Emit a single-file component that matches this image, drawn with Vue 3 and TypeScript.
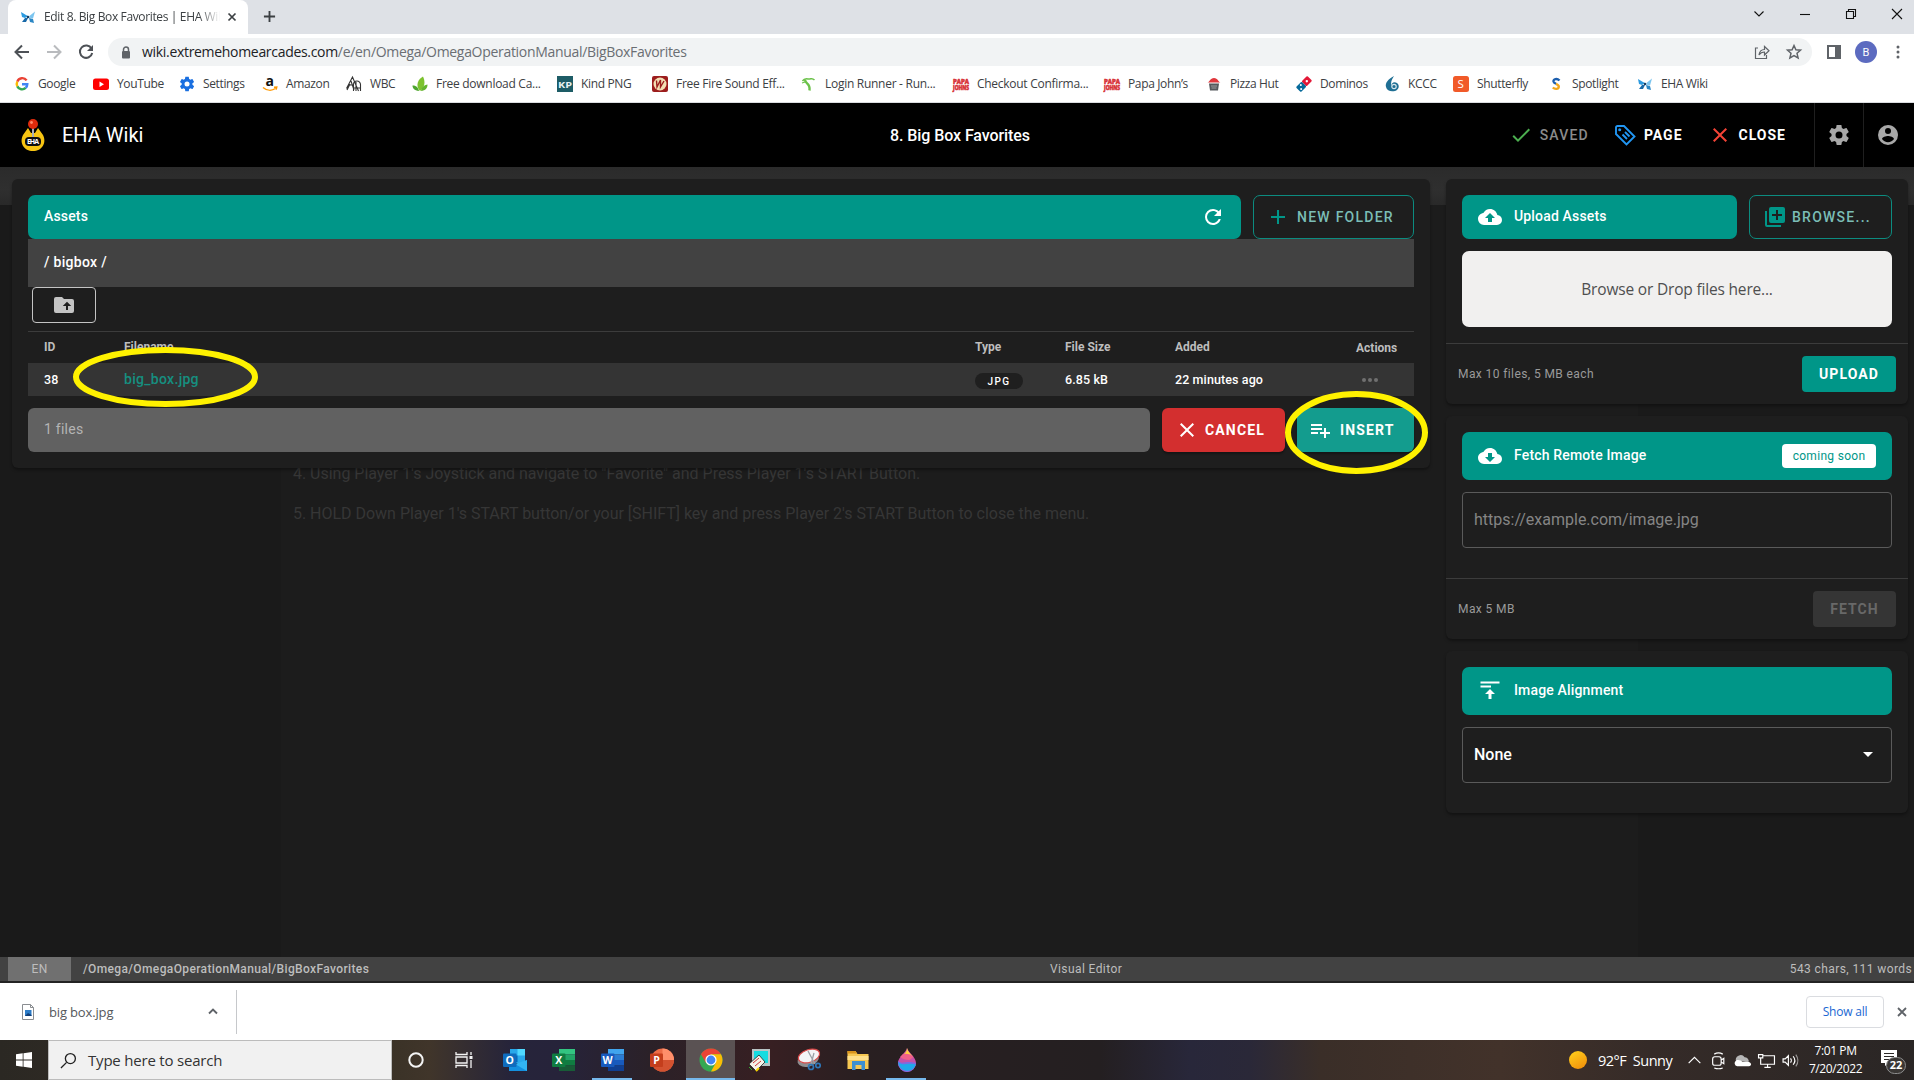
<script setup lang="ts">
interface Bookmark {
  label: string
  icon: string
  width: number
}

const bookmarks: Bookmark[] = [
  { label: 'Google', icon: 'google', width: 79 },
  { label: 'YouTube', icon: 'youtube', width: 86 },
  { label: 'Settings', icon: 'settings', width: 83 },
  { label: 'Amazon', icon: 'amazon', width: 84 },
  { label: 'WBC', icon: 'wbc', width: 66 },
  { label: 'Free download Ca...', icon: 'leaf', width: 145 },
  { label: 'Kind PNG', icon: 'kp', width: 95 },
  { label: 'Free Fire Sound Eff...', icon: 'fire', width: 149 },
  { label: 'Login Runner - Run...', icon: 'runner', width: 152 },
  { label: 'Checkout Confirma...', icon: 'papa', width: 151 },
  { label: 'Papa John’s', icon: 'papa', width: 102 },
  { label: 'Pizza Hut', icon: 'hut', width: 90 },
  { label: 'Dominos', icon: 'dominos', width: 88 },
  { label: 'KCCC', icon: 'kccc', width: 69 },
  { label: 'Shutterfly', icon: 'shutterfly', width: 95 },
  { label: 'Spotlight', icon: 'spotlight', width: 89 },
  { label: 'EHA Wiki', icon: 'eha', width: 80 },
]

const mdi = {
  check: 'M21,7L9,19L3.5,13.5L4.91,12.09L9,16.17L19.59,5.59L21,7Z',
  close: 'M19,6.41L17.59,5L12,10.59L6.41,5L5,6.41L10.59,12L5,17.59L6.41,19L12,13.41L17.59,19L19,17.59L13.41,12L19,6.41Z',
  plus: 'M19,13H13V19H11V13H5V11H11V5H13V11H19V13Z',
  refresh: 'M17.65,6.35C16.2,4.9 14.21,4 12,4A8,8 0 0,0 4,12A8,8 0 0,0 12,20C15.73,20 18.84,17.45 19.73,14H17.65C16.83,16.33 14.61,18 12,18A6,6 0 0,1 6,12A6,6 0 0,1 12,6C13.66,6 15.14,6.69 16.22,7.78L13,11H20V4L17.65,6.35Z',
  folderUp: 'M20,6A2,2 0 0,1 22,8V18A2,2 0 0,1 20,20H4A2,2 0 0,1 2,18V6A2,2 0 0,1 4,4H10L12,6H20M10.75,13H14V17H16V13H19.25L15,8.75',
  playlistPlus: 'M3,16H10V14H3M18,14V10H16V14H12V16H16V20H18V16H22V14M14,6H3V8H14M14,10H3V12H14V10Z',
  cloudUp: 'M14,13V17H10V13H7L12,8L17,13M19.35,10.03C18.67,6.59 15.64,4 12,4C9.11,4 6.6,5.64 5.35,8.03C2.34,8.36 0,10.9 0,14A6,6 0 0,0 6,20H19A5,5 0 0,0 24,15C24,12.36 21.95,10.22 19.35,10.03Z',
  cloudDown: 'M17,13L12,18L7,13H10V9H14V13M19.35,10.03C18.67,6.59 15.64,4 12,4C9.11,4 6.6,5.64 5.35,8.03C2.34,8.36 0,10.9 0,14A6,6 0 0,0 6,20H19A5,5 0 0,0 24,15C24,12.36 21.95,10.22 19.35,10.03Z',
  plusBoxes: 'M19,11H15V15H13V11H9V9H13V5H15V9H19M20,2H8A2,2 0 0,0 6,4V16A2,2 0 0,0 8,18H20A2,2 0 0,0 22,16V4A2,2 0 0,0 20,2M4,6H2V20A2,2 0 0,0 4,22H18V20H4V6Z',
  alignTop: 'M2.5,2.5H21.5V4.5H2.5ZM2.5,6.5H13V8.5H2.5ZM12,10L17,15H13.5V20H10.5V15H7Z',
  cog: 'M12,15.5A3.5,3.5 0 0,1 8.5,12A3.5,3.5 0 0,1 12,8.5A3.5,3.5 0 0,1 15.5,12A3.5,3.5 0 0,1 12,15.5M19.43,12.97C19.47,12.65 19.5,12.33 19.5,12C19.5,11.67 19.47,11.34 19.43,11L21.54,9.37C21.73,9.22 21.78,8.95 21.66,8.73L19.66,5.27C19.54,5.05 19.27,4.96 19.05,5.05L16.56,6.05C16.04,5.66 15.5,5.32 14.87,5.07L14.5,2.42C14.46,2.18 14.25,2 14,2H10C9.75,2 9.54,2.18 9.5,2.42L9.13,5.07C8.5,5.32 7.96,5.66 7.44,6.05L4.95,5.05C4.73,4.96 4.46,5.05 4.34,5.27L2.34,8.73C2.21,8.95 2.27,9.22 2.46,9.37L4.57,11C4.53,11.34 4.5,11.67 4.5,12C4.5,12.33 4.53,12.65 4.57,12.97L2.46,14.63C2.27,14.78 2.21,15.05 2.34,15.27L4.34,18.73C4.46,18.95 4.73,19.03 4.95,18.95L7.44,17.94C7.96,18.34 8.5,18.68 9.13,18.93L9.5,21.58C9.54,21.82 9.75,22 10,22H14C14.25,22 14.46,21.82 14.5,21.58L14.87,18.93C15.5,18.67 16.04,18.34 16.56,17.94L19.05,18.95C19.27,19.03 19.54,18.95 19.66,18.73L21.66,15.27C21.78,15.05 21.73,14.78 21.54,14.63L19.43,12.97Z',
  account: 'M12,19.2C9.5,19.2 7.29,17.92 6,16C6.03,14 10,12.9 12,12.9C14,12.9 17.97,14 18,16C16.71,17.92 14.5,19.2 12,19.2M12,5A3,3 0 0,1 15,8A3,3 0 0,1 12,11A3,3 0 0,1 9,8A3,3 0 0,1 12,5M12,2A10,10 0 0,0 2,12A10,10 0 0,0 12,22A10,10 0 0,0 22,12C22,6.47 17.5,2 12,2Z',
  menuDown: 'M7,10L12,15L17,10H7Z',
}

const apps = ['outlook', 'excel', 'word', 'powerpoint', 'chrome', 'viewer', 'snip', 'explorer', 'paint']
const openApps = ['word', 'chrome', 'paint']
const office: Record<string, { letter: string; top: string; mid: string; low: string; tile: string }> = {
  excel: { letter: 'X', top: '#33c481', mid: '#21a366', low: '#185c37', tile: '#107c41' },
  word: { letter: 'W', top: '#41a5ee', mid: '#2b7cd3', low: '#103f91', tile: '#185abd' },
}
</script>

<template>
  <div class="screen">
    <header class="tabstrip">
      <div class="tab">
        <svg class="i16 fav" viewBox="0 0 16 16">
          <path d="M1 3l5 3 2 1-3 2-3-1z" fill="#2d9be0" /><path d="M15 2.500l-5 4-1 2 4 1z" fill="#7cc5ef" />
          <path d="M2 13l3-4 3 0-2 4z" fill="#1768a8" /><path d="M14 14l-1-4-4-1 1 4z" fill="#2a86c4" />
          <circle cx="8" cy="8" r="1.300" fill="#1b3d60" />
        </svg>
        <span class="tab-title">Edit 8. Big Box Favorites | EHA Wiki</span>
        <svg class="tab-x" viewBox="0 0 10 10"><path d="M1.500 1.500l7 7m0-7l-7 7" stroke="#3c4043" stroke-width="1.700" /></svg>
      </div>
      <svg class="newtab" viewBox="0 0 14 14"><path d="M7 1v12M1 7h12" stroke="#3c4043" stroke-width="2" /></svg>
      <div class="win">
        <svg viewBox="0 0 12 12"><path d="M1.500 3.500l4.500 4.500 4.500-4.500" /></svg>
        <svg viewBox="0 0 12 12"><path d="M1 6.500h10" /></svg>
        <svg viewBox="0 0 12 12"><path d="M1.500 3.500h7v7h-7zM3.500 3.500v-2h7v7h-2" /></svg>
        <svg viewBox="0 0 12 12"><path d="M1 1l10 10M11 1L1 11" /></svg>
      </div>
    </header>

    <div class="toolbar">
      <svg class="nav" viewBox="0 0 16 16"><path d="M15 8H2M8 1.500L1.500 8 8 14.500" stroke="#4d5156" /></svg>
      <svg class="nav" viewBox="0 0 16 16"><path d="M1 8h13M8 1.500L14.500 8 8 14.500" stroke="#b9bbbe" /></svg>
      <svg class="nav" viewBox="0 0 16 16"><path d="M13.500 4.500A6.200 6.200 0 1 0 14.200 9" stroke="#4d5156" /><path d="M15 1v6H9z" fill="#4d5156" stroke="none" /></svg>
      <div class="omnibox">
        <svg class="lock" viewBox="0 0 10 13"><path d="M2.500 5V3.500a2.500 2.500 0 0 1 5 0V5" fill="none" stroke="#5f6368" stroke-width="1.500" /><rect x="1" y="5" width="8" height="7.500" rx="1" fill="#5f6368" /></svg>
        <span class="url">wiki.extremehomearcades.com<i>/e/en/Omega/OmegaOperationManual/BigBoxFavorites</i></span>
        <svg class="obi share" viewBox="0 0 16 16"><path d="M4 4H1.500v10.500h11V11M5 11c.5-4 2.500-5.500 5.500-5.500V2.500l4.500 4.300-4.500 4.200V8C8 8 6.300 9 5 11z" /></svg>
        <svg class="obi" viewBox="0 0 16 16"><path d="M8 1.500l1.900 4.300 4.600.4-3.500 3.100 1.100 4.600L8 11.500l-4.100 2.400L5 9.300 1.500 6.200l4.600-.4z" stroke-width="1.500" /></svg>
      </div>
      <svg class="panel" viewBox="0 0 14 14"><rect x="1" y="1" width="12" height="12" fill="none" stroke="#5f6368" stroke-width="2" /><path d="M8 1h5v12H8z" fill="#5f6368" /></svg>
      <span class="avatar">B</span>
      <svg class="dots" viewBox="0 0 4 14"><circle cx="2" cy="2" r="1.500" /><circle cx="2" cy="7" r="1.500" /><circle cx="2" cy="12" r="1.500" /></svg>
    </div>

    <nav class="bookmarks">
      <a v-for="b in bookmarks" :key="b.label" :class="{ long: b.label.endsWith('...') }" :style="{ width: b.width + 'px' }">
        <svg class="i16" viewBox="0 0 16 16">
          <template v-if="b.icon === 'google'">
            <g fill="none" stroke-width="2.400"><path d="M12.600 4.400A5.300 5.300 0 0 0 3.300 5.600" stroke="#ea4335" /><path d="M3.300 5.600a5.300 5.300 0 0 0 0 4.800" stroke="#fbbc05" /><path d="M3.300 10.400a5.300 5.300 0 0 0 8.400 1.500" stroke="#34a853" /><path d="M11.700 11.900A5.300 5.300 0 0 0 13.300 8.200H8" stroke="#4285f4" /></g>
          </template>
          <template v-else-if="b.icon === 'youtube'"><rect y="2.500" width="16" height="11.500" rx="2.500" fill="#f00" /><path d="M6.500 5.500v5.500l4.500-2.700z" fill="#fff" /></template>
          <template v-else-if="b.icon === 'settings'"><g transform="translate(-.6 -.6) scale(.72)"><path :d="mdi.cog" fill="#1a6fe0" /></g></template>
          <template v-else-if="b.icon === 'amazon'"><text x="3.500" y="10" font-size="14" font-weight="bold" fill="#111">a</text><path d="M1 11.500c4 3.500 9 3.300 12.500 1M12 11.300l2.800-.3-.6 2.700" fill="none" stroke="#f90" stroke-width="1.400" /></template>
          <template v-else-if="b.icon === 'wbc'"><g fill="none" stroke="#333" stroke-width="1.100"><path d="M.5 12.500L6.500 1l6 14M3 9h4.500M1 14l3-6M7.500 15V8.500a3.500 3.500 0 0 1 7 0V15M5 5l3 9M10 6v9M7 12h7" /></g></template>
          <template v-else-if="b.icon === 'leaf'"><path d="M8 15C3 10 6 3 11 .5 13.500 6 13 11 8 15z" fill="#7cc22e" /><path d="M7 15C2 14.500.500 12 .5 9.500 4 9.500 6 11 7 15z" fill="#4da52f" /><path d="M9 15c1-5 4-6 6.500-6.500 0 3.500-2 6-6.500 6.500z" fill="#63b32e" /></template>
          <template v-else-if="b.icon === 'kp'"><rect width="16" height="16" fill="#1d5c66" /><text x="1" y="11.500" font-size="9.500" font-weight="bold" fill="#e8f2f2" textLength="14" lengthAdjust="spacingAndGlyphs">KP</text></template>
          <template v-else-if="b.icon === 'fire'"><rect width="16" height="16" rx="2" fill="#9c1d1d" /><circle cx="8" cy="8" r="6.500" fill="#f3dfb4" /><path d="M4.500 4.500L5 11l3.500-7v7L12 5" fill="none" stroke="#9c1d1d" stroke-width="1.400" /></template>
          <template v-else-if="b.icon === 'runner'"><g fill="none" stroke="#6cc24a"><path d="M1.500 5C4 1 7 3.500 9 3s2.500-1 4.500 1" stroke-width="1.500" /><path d="M4 3.500c0 5 5.500 3 4.500 11" stroke-width="2.400" /><path d="M1 7l3-1" stroke-width="1.200" /></g></template>
          <template v-else-if="b.icon === 'papa'"><text x="0" y="8" font-size="7" font-weight="bold" fill="#d8353a" stroke="#d8353a" stroke-width=".7" textLength="16" lengthAdjust="spacingAndGlyphs">PAPA</text><text x="0" y="13.800" font-size="6.500" font-weight="bold" fill="#d8353a" stroke="#d8353a" stroke-width=".7" textLength="16" lengthAdjust="spacingAndGlyphs">JOHNS</text></template>
          <template v-else-if="b.icon === 'hut'"><path d="M1.500 6.500C4 6 4 2 8 2s4 4 6.500 4.500z" fill="#e0373c" /><path d="M3 7.500h10l-1 7H4z" fill="#55585c" /><path d="M5 10h6M5.500 12h5" stroke="#bbb" stroke-width=".7" /></template>
          <template v-else-if="b.icon === 'dominos'"><g transform="rotate(45 8 8)"><rect x="4.500" y="0" width="7" height="8" rx="1" fill="#e31837" /><rect x="4.500" y="8" width="7" height="8" rx="1" fill="#066a9b" /><g fill="#fff"><circle cx="8" cy="4" r="1.200" /><circle cx="6.500" cy="11" r="1" /><circle cx="9.500" cy="13.500" r="1" /></g></g></template>
          <template v-else-if="b.icon === 'kccc'"><path d="M10 0C4 3 1 7 2 11s5 5 9 4 5-6 2-8-6 0-5 3C6 7 8 3 10 0z" fill="#1f6f94" /><circle cx="10" cy="10.500" r="2.200" fill="none" stroke="#d7e6ec" stroke-width="1.200" /></template>
          <template v-else-if="b.icon === 'shutterfly'"><rect width="16" height="16" rx="2.500" fill="#f15a29" /><text x="4.500" y="12" font-size="11.500" fill="#fff">S</text></template>
          <template v-else-if="b.icon === 'spotlight'"><path d="M11.500 4.500C9 2 5 3 5.500 5.500c.3 1.300 1.500 1.800 2.600 2.300" fill="none" stroke="#1d5fae" stroke-width="2.400" /><path d="M8 7.800c1.600.7 3 1.400 2.800 3-.3 2.500-4 2.700-6 .7" fill="none" stroke="#f2a81d" stroke-width="2.400" /></template>
          <template v-else><path d="M1 3l5 3 2 1-3 2-3-1z" fill="#2d9be0" /><path d="M15 2.500l-5 4-1 2 4 1z" fill="#7cc5ef" /><path d="M2 13l3-4h3l-2 4z" fill="#1768a8" /><path d="M14 14l-1-4-4-1 1 4z" fill="#2a86c4" /><circle cx="8" cy="8" r="1.300" fill="#1b3d60" /></template>
        </svg>
        <span>{{ b.label }}</span>
      </a>
    </nav>

    <div class="appbar">
      <div class="brand">
        <svg class="logo" viewBox="0 0 26 34">
          <path d="M3 17l5-7 3 5h4l3-5 5 7c4 8-1 16-10 16S-1 25 3 17z" fill="#f7c412" />
          <path d="M13 10v9" stroke="#a9adb3" stroke-width="2" /><circle cx="13" cy="6" r="5" fill="#e02b0c" /><circle cx="11.500" cy="4.500" r="1.400" fill="#ff8a6a" />
          <rect x="5" y="19" width="16" height="9" rx="4" fill="#0d0d10" /><text x="7" y="26.200" font-size="7" font-weight="bold" fill="#fff" textLength="12">EHA</text>
        </svg>
        <span>EHA Wiki</span>
      </div>
      <div class="page-title">8. Big Box Favorites</div>
      <div class="actions">
        <span class="act saved"><svg class="i24" viewBox="0 0 24 24"><path :d="mdi.check" fill="#4caf50" /></svg>SAVED</span>
        <span class="act page"><svg class="i24" viewBox="0 0 24 24"><g fill="none" stroke="#2196f3" stroke-width="1.900"><path d="M3 4.500V11l10.500 10.500 8-8L11 3H4.500A1.500 1.500 0 0 0 3 4.500z" /><path d="M9.500 11.500l4.500 4.500M12 9l4.500 4.500" /></g><circle cx="6.700" cy="6.700" r="1.500" fill="#2196f3" /></svg>PAGE</span>
        <span class="act shut"><svg class="i24" viewBox="0 0 24 24"><path :d="mdi.close" fill="#f44336" /></svg>CLOSE</span>
        <span class="sq"><svg class="i24" viewBox="0 0 24 24"><path :d="mdi.cog" fill="#a8a8a8" /></svg></span>
        <span class="sq"><svg class="i24" viewBox="0 0 24 24"><path :d="mdi.account" fill="#a8a8a8" /></svg></span>
      </div>
    </div>

    <main class="editor">
      <div class="editor-tools"></div>
      <div class="paper">
        <p>4. Using Player 1's Joystick and navigate to "Favorite" and Press Player 1's START Button.</p>
        <p>5. HOLD Down Player 1's START button/or your [SHIFT] key and press Player 2's START Button to close the menu.</p>
      </div>

      <div class="modal">
        <section class="card assets">
          <div class="row">
            <div class="bar teal"><span>Assets</span><svg class="i24 end" viewBox="0 0 24 24"><path :d="mdi.refresh" fill="#fff" /></svg></div>
            <button class="outline newf"><svg class="i24" viewBox="0 0 24 24"><path :d="mdi.plus" fill="#009688" /></svg>NEW FOLDER</button>
          </div>
          <div class="crumb">/ bigbox /</div>
          <button class="up"><svg class="i24" viewBox="0 0 24 24"><path :d="mdi.folderUp" fill="#c4c4c4" /></svg></button>
          <div class="tr th"><span>ID</span><span>Filename</span><span>Type</span><span>File Size</span><span>Added</span><span class="ac">Actions</span></div>
          <div class="tr td"><span>38</span><span class="fn">big_box.jpg</span><span><b class="chip">JPG</b></span><span>6.85 kB</span><span>22 minutes ago</span><span class="ell"><i></i><i></i><i></i></span></div>
          <div class="row foot">
            <div class="count">1 files</div>
            <button class="cancel"><svg class="i24" viewBox="0 0 24 24"><path :d="mdi.close" fill="#fff" /></svg>CANCEL</button>
            <button class="insert"><svg class="i24" viewBox="0 0 24 24"><path :d="mdi.playlistPlus" fill="#fff" /></svg>INSERT</button>
          </div>
        </section>

        <aside>
          <section class="card c1">
            <div class="row">
              <div class="bar teal"><svg class="i24" viewBox="0 0 24 24"><path :d="mdi.cloudUp" fill="#fff" /></svg><span>Upload Assets</span></div>
              <button class="outline browse"><svg class="i24" viewBox="0 0 24 24"><path :d="mdi.plusBoxes" fill="#009688" /></svg>BROWSE...</button>
            </div>
            <div class="drop">Browse or Drop files here...</div>
            <div class="cardfoot"><span>Max 10 files, 5 MB each</span><button class="upload">UPLOAD</button></div>
          </section>
          <section class="card c2">
            <div class="bar tall teal"><svg class="i24" viewBox="0 0 24 24"><path :d="mdi.cloudDown" fill="#fff" /></svg><span>Fetch Remote Image</span><div class="soon">coming soon</div></div>
            <div class="field ph">https://example.com/image.jpg</div>
            <div class="cardfoot"><span>Max 5 MB</span><button class="fetch">FETCH</button></div>
          </section>
          <section class="card c3">
            <div class="bar tall teal"><svg class="i24" viewBox="0 0 24 24"><path :d="mdi.alignTop" fill="#fff" /></svg><span>Image Alignment</span></div>
            <div class="field">None<svg class="i24 end" viewBox="0 0 24 24"><path :d="mdi.menuDown" fill="#fff" /></svg></div>
          </section>
        </aside>
      </div>
    </main>

    <div class="status">
      <span class="en">EN</span>
      <span class="path">/Omega/OmegaOperationManual/BigBoxFavorites</span>
      <span class="mode">Visual Editor</span>
      <span class="chars">543 chars, 111 words</span>
    </div>

    <div class="downloads">
      <div class="dl">
        <svg class="file" viewBox="0 0 12 16"><path d="M.5.5h8l3 3v12H.5zM8.500.5v3h3" fill="#fff" stroke="#8a8d91" /><rect x="3" y="6" width="6.500" height="6" fill="#2d7cc7" /><path d="M3 12l3-3 3.500 2v1z" fill="#123f78" /></svg>
        <span>big box.jpg</span>
        <svg class="chev" viewBox="0 0 10 7"><path d="M1 5.500l4-4 4 4" fill="none" stroke="#5f6368" stroke-width="1.900" /></svg>
      </div>
      <button class="showall">Show all</button>
      <svg class="dlx" viewBox="0 0 10 10"><path d="M1 1l8 8m0-8L1 9" stroke="#5f6368" stroke-width="1.800" /></svg>
    </div>

    <footer class="taskbar">
      <div class="start"><svg viewBox="0 0 16 16"><path d="M0 2.200L6.700 1.300V7.600H0zM7.500 1.200L16 0v7.600H7.500zM0 8.400h6.700v6.300L0 13.800zM7.500 8.400H16V16l-8.500-1.200z" fill="#fff" /></svg></div>
      <div class="search"><svg viewBox="0 0 18 18"><circle cx="11" cy="7" r="5.300" /><path d="M7 11l-6 6" /></svg>Type here to search</div>
      <span class="tb cortana"><svg viewBox="0 0 24 24"><circle cx="12" cy="12" r="6.700" fill="none" stroke="#f4f4f4" stroke-width="2" /></svg></span>
      <span class="tb tv"><svg viewBox="0 0 24 24"><g fill="none" stroke="#f4f4f4" stroke-width="1.300"><path d="M4 4v2.500h11V4M4 20v-2.500h11V20M4 9h11v6H4zM19 4v3M19 12v8" /></g><rect x="17.500" y="8" width="3" height="3" fill="#f4f4f4" /></svg></span>
      <span v-for="a in apps" :key="a" class="tb" :class="{ open: openApps.includes(a), active: a === 'chrome' }">
        <svg viewBox="0 0 24 24">
          <template v-if="office[a]">
            <path d="M7 1h16v5.500H7z" :fill="office[a].top" /><path d="M7 6.500h16V12H7z" :fill="office[a].mid" /><path d="M7 12h16v5.500H7z" :fill="office[a].tile" /><path d="M7 17.500h16V23H7z" :fill="office[a].low" />
            <rect x="0" y="5.500" width="13.500" height="13.500" rx="1" :fill="office[a].tile" /><text x="6.700" y="16" text-anchor="middle" font-size="10.500" font-weight="bold" fill="#fff">{{ office[a].letter }}</text>
          </template>
          <template v-else-if="a === 'outlook'">
            <path d="M7 1h15v14H7z" fill="#28a8ea" /><path d="M14.500 1H22v6.500h-7.500z" fill="#50d9ff" /><path d="M7 7.500h7.500V14H7z" fill="#0364b8" /><path d="M6 12l9 5 9-5v11H6z" fill="#1490df" /><path d="M24 12v11L12 16z" fill="#32b4f2" />
            <rect y="5.500" width="13.500" height="13.500" rx="1" fill="#0f6cbd" /><text x="6.700" y="16" text-anchor="middle" font-size="10.500" font-weight="bold" fill="#fff">O</text>
          </template>
          <template v-else-if="a === 'powerpoint'">
            <circle cx="12.500" cy="12" r="11.500" fill="#ed6c47" /><path d="M12.500.5A11.500 11.500 0 0 1 24 12H12.500z" fill="#ff8f6b" /><path d="M1 12h23a11.500 11.500 0 0 1-23 0z" fill="#d35230" />
            <rect y="5.500" width="13" height="13.500" rx="1" fill="#c43e1c" /><text x="6.500" y="16" text-anchor="middle" font-size="10.500" font-weight="bold" fill="#fff">P</text>
          </template>
          <template v-else-if="a === 'chrome'">
            <circle cx="12" cy="12" r="11.500" fill="#34a853" /><path d="M2 6.300A11.500 11.500 0 0 1 22 6.300H12L7 15z" fill="#ea4335" /><path d="M22 6.300A11.500 11.500 0 0 1 12 23.500L17 14.500 12 6.300z" fill="#fbbc05" />
            <circle cx="12" cy="12" r="5.600" fill="#fff" /><circle cx="12" cy="12" r="4.400" fill="#4285f4" />
          </template>
          <template v-else-if="a === 'viewer'">
            <rect x="4" y="1" width="18" height="17" fill="#b8c4c4" /><rect x="6" y="3" width="14" height="12" fill="#14dce0" /><path d="M1 16L11 7l6 7-9 9z" fill="#f5f2e8" stroke="#222" stroke-width=".8" /><path d="M5 15l6-5M7 18l6-5" stroke="#c33" /><path d="M8 23l3-3" stroke="#f6d400" stroke-width="2" /><path d="M1 19l3 3" stroke="#3a3" />
          </template>
          <template v-else-if="a === 'snip'">
            <ellipse cx="11" cy="11.500" rx="11" ry="7" transform="rotate(-18 11 11)" fill="#8d8d90" /><ellipse cx="12" cy="8" rx="11" ry="6.300" transform="rotate(-18 12 8)" fill="#f4f4f6" stroke="#d94b4b" stroke-width="1.200" />
            <path d="M11 3l7 13M17 5l-3 11" stroke="#9aa0a6" stroke-width="1.300" /><g fill="none" stroke="#2e77b8" stroke-width="1.700"><circle cx="14" cy="19" r="2.500" /><circle cx="21" cy="17.500" r="2.200" /></g>
          </template>
          <template v-else-if="a === 'explorer'">
            <path d="M1.500 3h8l2 3h11v15h-21z" fill="#f6c752" /><path d="M1.500 3h8l1.500 2.500h-9.500z" fill="#d9941b" /><path d="M1.500 8h21v4h-21z" fill="#ffe08a" /><path d="M6 22v-9h13v9h-3.500v-5h-6v5z" fill="#3d8fd1" />
          </template>
          <template v-else>
            <path d="M12 0c1 4 9 9 9 15a9 9 0 0 1-18 0C3 9 11 5 12 0z" fill="#c651a8" /><path d="M12 0c1 4 3.500 6 5.500 8L9 6c2-2 3-3 3-6z" fill="#ffd23e" /><path d="M8 6c4-1 8 0 10.500 3l-4 3c-4 0-7-1-9.500-3z" fill="#f0608a" /><path d="M3.200 13c4 4 8-1 17.800 2a9 9 0 0 1-18 0z" fill="#7c6be0" /><path d="M3.200 14c5 5 9 0 17.600 2.500A9 9 0 0 1 3.200 14z" fill="#1fa9ea" />
          </template>
        </svg>
      </span>
      <div class="tray">
        <span class="sun"></span>
        <span class="weather">92°F&nbsp; Sunny</span>
        <svg class="tri caret" viewBox="0 0 16 16"><path d="M2.500 10.500L8 5l5.500 5.500" /></svg>
        <svg class="tri" viewBox="0 0 16 16"><rect x="2.500" y="4.500" width="8" height="8" rx="2" /><path d="M10.500 7.500l2.500-1.500v5l-2.500-1.500M4 2c2.500-1.500 5.500-1.500 8 0M4 15c2.500 1 5.500 1 8 0" /></svg>
        <svg class="tri" viewBox="0 0 16 16"><path d="M2 9a4.500 4.500 0 0 1 8-4 4 4 0 0 1 4 4z" fill="#b6b6b6" stroke="none" /><path d="M3 13.500a3 3 0 0 1-1-5.500c2-1 5 0 6 1.500 2-1 7-1 8 1.500a2 2 0 0 1-2 2.500z" fill="#fff" stroke="none" /></svg>
        <svg class="tri" viewBox="0 0 16 16"><path d="M4 3.500h11.500v8H3M9 11.500V14M6 14.500h6M.5 2.500h4v3h-4zM2.500 5.500V12" /></svg>
        <svg class="tri" viewBox="0 0 16 16"><path d="M1 6.500h2l3-3v9l-3-3H1zM8 6c1 1 1 3 0 4M10.500 4c2 2.500 2 5.500 0 8" /><path d="M13 2.500c2.500 3.500 2.500 7.500 0 11" opacity=".5" /></svg>
        <div class="clock"><span>7:01 PM</span><span>7/20/2022</span></div>
        <div class="notes"><svg viewBox="0 0 16 16"><path d="M0 0h16v13H8l-4 3v-3H0z" fill="#fff" /><path d="M3 3.500h10M3 6.500h10M3 9.500h6" stroke="#2d2a28" stroke-width="1.200" /></svg><b>22</b></div>
      </div>
    </footer>

    <svg class="marks" viewBox="0 0 1914 1080">
      <ellipse cx="165.500" cy="377" rx="89.500" ry="27" />
      <ellipse cx="1356.500" cy="432.500" rx="68.500" ry="38.500" />
    </svg>
  </div>
</template>

<style>
body { margin: 0; background: #1c1c1c; overflow: hidden; }
</style>

<style scoped>
* { box-sizing: border-box; }
.screen { position: relative; width: 1914px; height: 1080px; display: flex; flex-direction: column; overflow: hidden; font-family: Roboto, sans-serif; background: #1b1b1b; }
svg { display: block; flex: none; overflow: visible; }
svg text { font-family: "Open Sans", sans-serif; letter-spacing: 0; }
button { margin: 0; padding: 0; border: 0; background: none; font: inherit; display: flex; align-items: center; flex: none; white-space: nowrap; }
.i16 { width: 16px; height: 16px; }
.i24 { width: 24px; height: 24px; }
.end { margin-left: auto; }

.tabstrip { flex: none; height: 34px; background: #dee1e6; display: flex; align-items: flex-start; padding-left: 8px; }
.tab { width: 240px; height: 34px; background: #fff; border-radius: 8px 8px 0 0; display: flex; align-items: center; padding-left: 12px; }
.tab-title { width: 176px; margin-left: 8px; padding-bottom: 1px; font: 12px "Open Sans", sans-serif; letter-spacing: -0.36px; color: #3c4043; white-space: nowrap; overflow: hidden; mask-image: linear-gradient(90deg, #000 88%, transparent); }
.tab-x { width: 10px; height: 10px; margin-left: 7px; }
.newtab { width: 13px; height: 13px; margin: 10px 0 0 15px; }
.win { margin-left: auto; display: flex; gap: 34px; padding: 8px 11px 0 0; }
.win svg { width: 12px; height: 12px; fill: none; stroke: #111; stroke-width: 1.1; }

.toolbar { flex: none; height: 36px; background: #fff; display: flex; align-items: center; padding-left: 14px; }
.nav { width: 16px; height: 16px; margin-right: 16px; fill: none; stroke-width: 2; }
.omnibox { width: 1704px; height: 28px; margin-left: -2px; border-radius: 14px; background: #f1f3f4; display: flex; align-items: center; padding-left: 13px; }
.lock { width: 10px; height: 13px; }
.url { margin-left: 11px; padding-bottom: 1px; flex: 1; font: 14px "Open Sans", sans-serif; letter-spacing: -0.31px; color: #202124; }
.url i { font-style: normal; color: #6a6e73; }
.obi { width: 16px; height: 16px; margin-right: 10px; fill: none; stroke: #5f6368; stroke-width: 1.2; }
.share { margin-right: 16px; }
.panel { width: 14px; height: 14px; margin-left: 15px; }
.avatar { width: 22px; height: 22px; margin-left: 14px; border-radius: 50%; background: #5c6bc0; color: #fff; font-size: 11px; display: flex; align-items: center; justify-content: center; }
.dots { width: 4px; height: 14px; margin-left: 19px; fill: #5f6368; }

.bookmarks { flex: none; height: 33px; background: #fff; border-bottom: 1px solid #dadce0; display: flex; align-items: flex-start; padding: 6px 0 0 14px; }
.bookmarks a { flex: none; display: flex; align-items: center; gap: 8px; font: 12px/16px "Open Sans", sans-serif; letter-spacing: -0.36px; color: #3c4043; white-space: nowrap; }
.bookmarks .long { letter-spacing: -0.28px; }

.appbar { flex: none; height: 64px; background: #000; color: #fff; display: flex; align-items: center; }
.brand { flex: 1; display: flex; align-items: center; padding-left: 20px; font-size: 20px; }
.logo { width: 26px; height: 34px; margin-right: 16px; }
.page-title { font-size: 16px; font-weight: 500; letter-spacing: -0.08px; }
.actions { flex: none; width: 884px; display: flex; justify-content: flex-end; align-items: center; height: 64px; padding-right: 2px; }
.act { display: flex; align-items: center; gap: 7px; font-size: 14px; font-weight: 500; letter-spacing: 1.2px; }
.saved { color: #8b8b8b; margin-right: 24px; }
.page { margin-right: 25px; }
.shut { margin-right: 28px; }
.page, .shut { font-weight: 700; letter-spacing: 1px; }
.sq { width: 49px; height: 64px; border-left: 1px solid #1f1f1f; display: flex; align-items: center; justify-content: center; }

.editor { flex: none; height: 790px; position: relative; background: #1a1a1a; display: flex; flex-direction: column; }
.editor-tools { flex: none; height: 38px; background: linear-gradient(#2b2b2b, #2f2f2f 60%, #292929); }
.paper { flex: 1; width: 1357px; margin-left: 281px; background: #1c1c1c; padding: 257px 12px 0; font-size: 16px; line-height: 24px; letter-spacing: -0.02px; color: #363636; }
.paper p { margin: 0 0 16px; white-space: nowrap; }
.modal { position: absolute; inset: 0; display: flex; align-items: flex-start; gap: 16px; padding: 12px 6px 0 12px; }
aside { width: 462px; display: flex; flex-direction: column; gap: 12px; }
.card { background: #1e1e1e; border-radius: 6px; box-shadow: 0 2px 3px rgba(0, 0, 0, .35); padding: 16px; }
.assets { width: 1418px; height: 289px; }
.row { display: flex; gap: 12px; }
.bar { flex: 1; height: 44px; border-radius: 7px; display: flex; align-items: center; padding: 0 16px; color: #fff; font-size: 14px; font-weight: 500; letter-spacing: 0.16px; }
.bar > span { padding-bottom: 2px; }
.teal { background: #009688; }
.tall { height: 48px; flex: none; }
aside .bar .i24:first-child { margin-right: 12px; }
.outline { height: 44px; border: 1px solid #0c8c80; border-radius: 7px; color: #7bbdb6; font-size: 14px; font-weight: 500; letter-spacing: 1.25px; }
.newf { width: 161px; padding-left: 12px; gap: 7px; }
.browse { width: 143px; padding-left: 13px; gap: 5px; }
.crumb { height: 48px; background: #424242; color: #fff; padding-left: 16px; font-size: 14px; font-weight: 500; letter-spacing: 0.3px; line-height: 46px; }
.up { width: 64px; height: 36px; margin: 0 0 8px 4px; border: 1px solid #c4c4c4; border-radius: 4px; justify-content: center; }
.tr { display: grid; grid-template-columns: 80px 851px 90px 110px 180px 1fr; padding-left: 16px; align-items: center; }
.th { height: 32px; padding-bottom: 2px; border-top: 1px solid #3c3c3c; color: #bdbdbd; font-size: 12px; font-weight: 700; }
.ac { padding: 2px 0 0 1px; }
.td { height: 33px; background: #343434; color: #fff; font-size: 12.5px; font-weight: 500; letter-spacing: 0.1px; }
.fn { color: #168f80; font-size: 14px; letter-spacing: 0.3px; padding-bottom: 2px; }
.chip { display: flex; align-items: center; justify-content: center; width: 48px; height: 16px; margin-top: 3px; border-radius: 8px; background: #1f1f1f; font-size: 10px; font-weight: 500; letter-spacing: 1.5px; }
.ell { display: flex; gap: 2px; padding-left: 7px; }
.ell i { width: 4px; height: 4px; border-radius: 50%; background: #707070; }
.foot { margin-top: 12px; }
.count { flex: 1; height: 44px; border-radius: 6px; background: #616161; color: #b4b4b4; font-size: 14px; letter-spacing: 0.25px; line-height: 42px; padding-left: 16px; }
.cancel, .insert { height: 44px; border-radius: 6px; color: #fff; font-size: 14px; font-weight: 700; letter-spacing: 1.15px; box-shadow: 0 2px 2px rgba(0, 0, 0, .3); }
.cancel { width: 123px; background: #d32f2f; padding-left: 13px; gap: 6px; }
.insert { width: 117px; background: #139c8e; padding-left: 11px; gap: 8px; }

.c1 { height: 225px; }
.c2 { height: 223px; }
.c3 { height: 162px; }
.drop { height: 76px; margin-top: 12px; border-radius: 7px; background: #f1f0ef; color: #4f4f4f; display: flex; align-items: center; justify-content: center; font: 15.5px "Open Sans", sans-serif; letter-spacing: -0.18px; }
.cardfoot { margin: 16px -16px 0; border-top: 1px solid #3c3c3c; height: 61px; display: flex; align-items: center; justify-content: space-between; padding: 0 12px; color: #9a9a9a; font-size: 12px; letter-spacing: 0.4px; }
.c2 .cardfoot { margin-top: 30px; }
.upload, .fetch { height: 36px; border-radius: 4px; justify-content: center; font-size: 14px; font-weight: 700; letter-spacing: 1.1px; }
.upload { width: 94px; background: #009688; color: #fff; }
.fetch { width: 83px; background: #353535; color: #686868; }
.soon { margin-left: auto; width: 94px; height: 24px; border-radius: 4px; background: #fff; color: #009688; display: flex; align-items: center; justify-content: center; font-size: 12px; font-weight: 400; letter-spacing: 0.3px; }
.field { height: 56px; margin-top: 12px; border: 1px solid #5a5a5a; border-radius: 4px; color: #fff; font-size: 16px; font-weight: 500; display: flex; align-items: center; padding: 0 11px 2px; }
.ph { color: #858585; font-weight: 400; }

.status { flex: none; height: 26px; border-bottom: 2px solid #232323; background: #424242; display: flex; color: #bdbdbd; font-size: 12px; letter-spacing: 0.4px; line-height: 24px; padding-left: 8px; }
.en { width: 63px; background: #707070; text-align: center; }
.path { margin-left: 12px; width: 967px; font-weight: 500; letter-spacing: 0.37px; }
.mode { flex: 1; }
.chars { padding-right: 2px; }

.downloads { flex: none; height: 57px; background: #fff; display: flex; align-items: center; }
.dl { width: 237px; height: 44px; border-right: 1px solid #c6c8cb; display: flex; align-items: center; padding-left: 22px; font: 13px "Open Sans", sans-serif; letter-spacing: -0.15px; color: #55585c; }
.file { width: 12px; height: 16px; margin-right: 15px; }
.chev { width: 10px; height: 7px; margin: 0 18px 0 auto; }
.showall { margin-left: auto; width: 78px; height: 32px; border: 1px solid #dadce0; border-radius: 4px; justify-content: center; color: #1a67d2; font: 12px "Open Sans", sans-serif; letter-spacing: -0.2px; }
.dlx { width: 10px; height: 10px; margin: 0 7px 0 13px; }

.taskbar { flex: none; height: 40px; display: flex; color: #fff; font-family: "Open Sans", sans-serif; background: linear-gradient(90deg, #2b2823 0, #3a3227 390px, #40352a 430px, #26243a 510px, #26233a 560px, #2b2128 650px, #371f22 770px, #291f21 860px, #241f21 1100px, #28273a 1190px, #2a2838 1250px, #3a2e28 1320px, #42322a 1500px, #352b28 1650px, #2a2625); }
.start { width: 48px; display: flex; align-items: center; justify-content: center; }
.start svg { width: 16px; height: 16px; }
.search { width: 344px; background: #f1f1f1; border: 1px solid #bcbcbc; display: flex; align-items: center; color: #333; font-size: 15px; letter-spacing: -0.53px; padding-left: 11px; gap: 11px; }
.search { letter-spacing: -0.2px; }
.search svg { width: 17px; height: 17px; fill: none; stroke: #222; stroke-width: 1.4; }
.tb { width: 49px; display: flex; align-items: center; justify-content: center; border-bottom: 2px solid transparent; padding-top: 2px; }
.tb svg { width: 24px; height: 24px; }
.cortana { width: 47px; }
.tv { margin-right: 2px; }
.open { position: relative; }
.open::after { content: ""; position: absolute; left: 4px; right: 5px; bottom: -2px; height: 2px; background: #76b9ed; }
.active { background: #5a5253; }
.active::after { left: 0; right: 0; }
.tray { margin-left: auto; display: flex; align-items: center; padding-right: 9px; }
.sun { width: 18px; height: 18px; border-radius: 50%; background: linear-gradient(150deg, #ffd21c, #f08a0a); margin-right: 11px; }
.weather { width: 88px; font-size: 14.5px; letter-spacing: -0.5px; white-space: pre; }
.tri { width: 17px; height: 17px; margin-right: 7px; fill: none; stroke: #fff; stroke-width: 1.1; }
.clock { width: 65px; margin-left: -3px; display: flex; flex-direction: column; align-items: center; font-size: 12px; line-height: 18px; letter-spacing: -0.4px; }
.notes { position: relative; width: 26px; height: 26px; margin: 4px -2px 0 13px; }
.notes svg { width: 16px; height: 16px; margin-top: 1px; }
.notes b { position: absolute; left: 5px; top: 8px; width: 20px; height: 17px; border: 1px solid #8d8d8d; border-radius: 9px; background: #3a3735; font-size: 11px; line-height: 14px; text-align: center; }

.marks { position: absolute; inset: 0; width: 1914px; height: 1080px; pointer-events: none; }
.marks ellipse { fill: none; stroke: #fff200; stroke-width: 6; }
</style>
